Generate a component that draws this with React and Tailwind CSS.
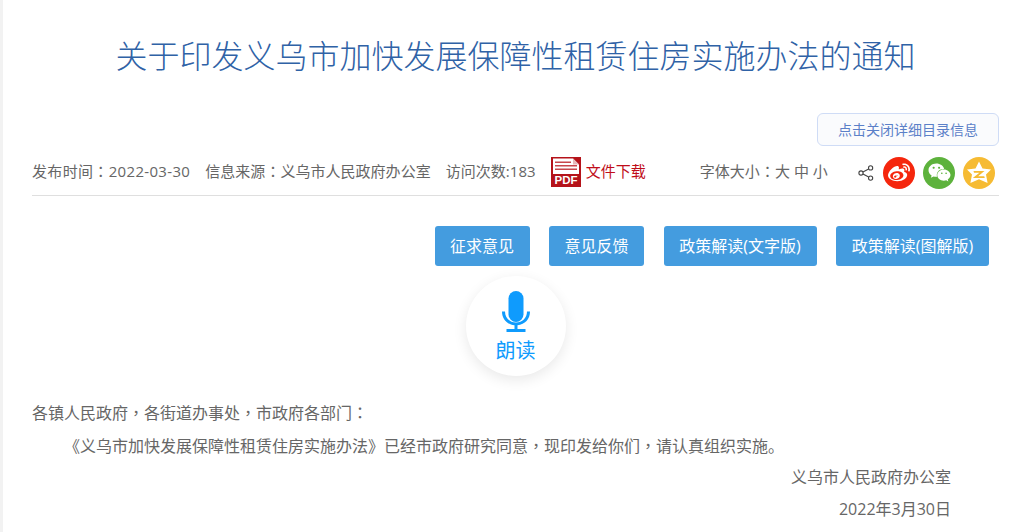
import { FaWeibo, FaWeixin } from "react-icons/fa";

const font = "font-['Open_Sans','Noto_Sans_CJK_SC',sans-serif]";

// the source page centres full-width punctuation, which the TC cut of the font does too
function Punct({ children }) {
  return <span className="font-['Noto_Sans_CJK_TC',sans-serif]">{children}</span>;
}

function ShareIcon() {
  return (
    <svg viewBox="0 0 16 16" className="h-4 w-4 text-[#444]" fill="none" stroke="currentColor" strokeWidth="1.1">
      <circle cx="12.6" cy="2.9" r="2.1" />
      <circle cx="3" cy="8" r="2.1" />
      <circle cx="12.6" cy="13.1" r="2.1" />
      <path d="M4.9 7 10.7 3.900M4.9 9 10.7 12.100" />
    </svg>
  );
}

function PdfIcon() {
  return (
    <svg viewBox="0 0 30 30" className="h-[30px] w-[30px] shrink-0">
      <path d="M0 0h30v30H0z" fill="#b5131a" />
      <path d="M2 1.500h20l6 6V17H2z" fill="#fff" />
      <path d="M22 1.500v6h6z" fill="#e7b9bb" />
      <path d="M4 4.500h16v1.600H4zM4 8h22v1.600H4zM4 11.500h22v1.600H4z" fill="#c8474c" />
      <text x="15" y="27" textAnchor="middle" fontSize="11.500" fontWeight="700" fontFamily="Liberation Sans, sans-serif" fill="#fff">PDF</text>
    </svg>
  );
}

function QzoneIcon() {
  return (
    <svg viewBox="0 0 32 32" className="h-8 w-8 rounded-full bg-[#f6bb33]">
      <path d="M16 4.500l3.500 7 8.500 1.100-5 4.800 1.600 8.600L16 22.300l-8.600 3.700L9 17.400l-5-4.800 8.500-1.100z" fill="#fff" />
      <path d="M10.500 14h11l-6.400 5.200h6.100l.6 1.800H9.800l6.600-5.200h-5.400z" fill="#f6bb33" />
    </svg>
  );
}

function MicIcon() {
  return (
    <svg viewBox="0 0 28 42" className="h-[42px] w-[28px]" fill="#0f9bfd">
      <rect x="6.500" y="0" width="15" height="31" rx="7.500" />
      <path d="M1.500 20.500h-1.500c0 7.500 5 13 12.500 13.800V38H4.500v3h19v-3h-8v-3.700C23 33.500 28 28 28 20.500h-3c0 6.500-4.800 11-11 11S3 27 3 20.500z" />
    </svg>
  );
}

function ActionButton({ width, children }) {
  return (
    <button className={`h-10 rounded-[3px] bg-[#449cdf] text-base text-white ${width}`}>
      {children}
    </button>
  );
}

export default function App() {
  return (
    <div className={`${font} h-[532px] overflow-hidden border-l-[3px] border-[#f2f2f2] bg-white pl-[29px] pr-[27px] text-base text-[#666]`}>
      <h1 className="pt-[31px] text-center text-[32px] leading-[50px] font-light text-[#2f62a6]">
        关于印发义乌市加快发展保障性租赁住房实施办法的通知
      </h1>

      <div className="mt-[32px] flex justify-end">
        <button className="h-[33px] w-[182px] rounded-md border border-[#cfdcf6] bg-[#fafbfd] text-sm text-[#5b80c8]">
          点击关闭详细目录信息
        </button>
      </div>

      <div className="flex h-[50px] items-center border-b border-[#dfdfdf] pt-[2px] text-[15px] tracking-[0.03px] text-[#666]">
        <span className="tracking-[0.33px]">发布时间<Punct>：</Punct>2022-03-30</span>
        <span className="ml-[15px]">信息来源<Punct>：</Punct>义乌市人民政府办公室</span>
        <span className="ml-[15px]">访问次数:183</span>
        <a className="ml-[15px] flex items-center gap-[5px] text-[#c00d1a]">
          <PdfIcon />
          文件下载
        </a>
        <span className="ml-[54px]">字体大小<Punct>：</Punct>大 中 小</span>
        <div className="mt-[2px] mr-1 ml-auto flex items-center gap-2">
          <span className="mr-[1px]"><ShareIcon /></span>
          <span className="flex h-8 w-8 items-center justify-center rounded-full bg-[#f5260d] text-white">
            <FaWeibo className="h-[22px] w-[22px]" />
          </span>
          <span className="flex h-8 w-8 items-center justify-center rounded-full bg-[#5db23c] text-white">
            <FaWeixin className="h-[23px] w-[23px]" />
          </span>
          <QzoneIcon />
        </div>
      </div>

      <div className="mt-[30px] flex justify-end gap-[19.5px] pr-[10px]">
        <ActionButton width="w-[95px]">征求意见</ActionButton>
        <ActionButton width="w-[95px]">意见反馈</ActionButton>
        <ActionButton width="w-[153px]">政策解读(文字版)</ActionButton>
        <ActionButton width="w-[153px]">政策解读(图解版)</ActionButton>
      </div>

      <div className="mt-[10px] flex justify-center">
        <div className="flex h-[100px] w-[100px] flex-col items-center rounded-full bg-white pt-[15px] shadow-[0_4px_14px_rgba(0,0,0,0.09)]">
          <MicIcon />
          <span className="mt-[5px] text-xl leading-[26px] text-[#0f9bfd]">朗读</span>
        </div>
      </div>

      <div className="mt-[21px] leading-[31.7px]">
        <p>各镇人民政府<Punct>，</Punct>各街道办事处<Punct>，</Punct>市政府各部门<Punct>：</Punct></p>
        <p className="indent-8">
          《义乌市加快发展保障性租赁住房实施办法》已经市政府研究同意<Punct>，</Punct>现印发给你们<Punct>，</Punct>请认真组织实施。
        </p>
        <p className="pr-[48px] text-right">义乌市人民政府办公室</p>
        <p className="pr-[48px] text-right">2022年3月30日</p>
      </div>
    </div>
  );
}
